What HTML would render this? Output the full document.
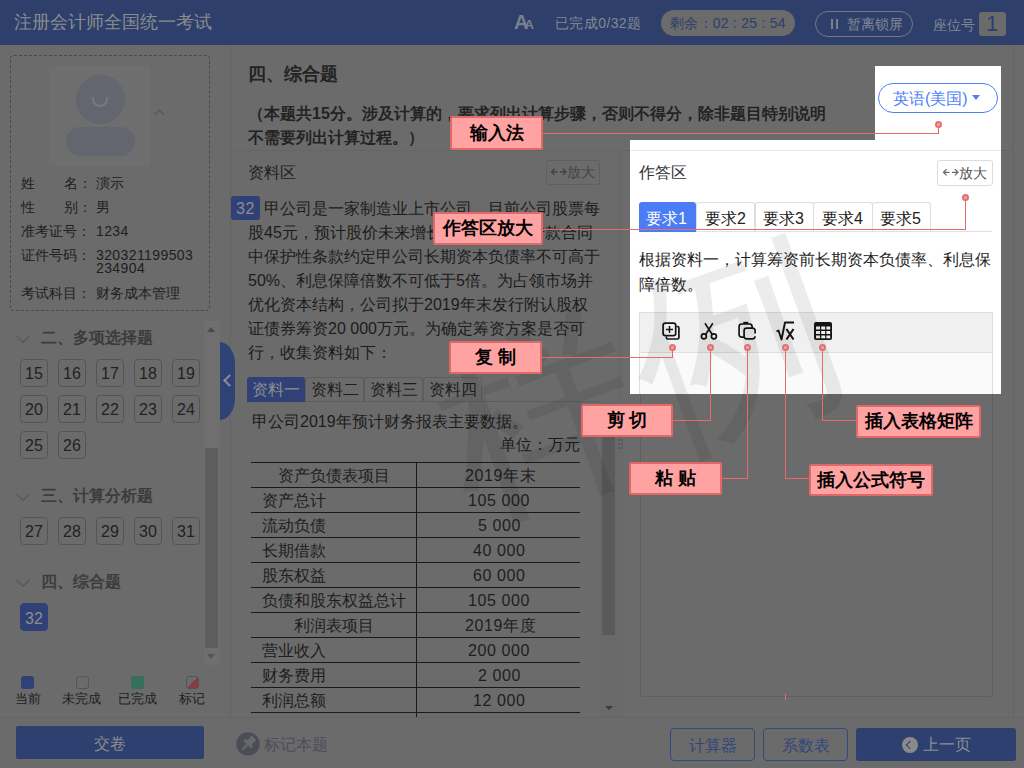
<!DOCTYPE html>
<html><head><meta charset="utf-8">
<style>
*{box-sizing:border-box;margin:0;padding:0}
html,body{width:1024px;height:768px;overflow:hidden;background:#6b6b6b;font-family:"Liberation Sans",sans-serif;color:#1e1e1e}
.a{position:absolute}
.t{position:absolute;white-space:nowrap;line-height:1}
.p{font-size:16px;color:#1c1c1c}
.num{position:absolute;width:28px;height:28px;border:1px solid #555;border-radius:4px;font-size:16px;line-height:27px;text-align:center;color:#222}
.sec{position:absolute;font-size:16px;font-weight:bold;color:#3c3c3c;line-height:1;white-space:nowrap}
.chev{position:absolute;width:10px;height:10px;border-right:1.3px solid #555;border-bottom:1.3px solid #555;transform:rotate(45deg)}
.row{position:absolute;left:251px;width:329px;height:1px;background:#1a1a1a}
.cell{position:absolute;font-size:16px;line-height:1;white-space:nowrap;color:#1e1e1e}
.dg{letter-spacing:0.6px}
.lbl{position:absolute;background:#ffa2a2;border:2px solid #e06868;border-radius:2px;font-size:17.5px;font-weight:bold;color:#000;text-align:center;white-space:nowrap}
.ln{position:absolute;background:#e96a6a}
.dot{position:absolute;width:7px;height:7px;border-radius:50%;background:#f4a6a6;border:2px solid #e27070}
.tab{position:absolute;border:1px solid #5d5d5d;border-bottom:none;border-radius:3px 3px 0 0}
</style></head><body>

<!-- HEADER -->
<div class="a" style="left:0;top:0;width:1024px;height:45px;background:#2d3f6a"></div>
<div class="t" style="left:14px;top:13px;font-size:18px;color:#8a8b90">注册会计师全国统一考试</div>
<div class="t" style="left:514px;top:12px;font-size:20px;font-weight:bold;color:#7b808c;letter-spacing:-4px">A<span style="font-size:13px">A</span></div>
<div class="t" style="left:555px;top:16px;font-size:14px;color:#838895;letter-spacing:0.4px">已完成0/32题</div>
<div class="a" style="left:661px;top:10px;width:134px;height:26px;border-radius:13px;background:#6b6b6b"></div>
<div class="t" style="left:670px;top:16px;font-size:14px;color:#2d3f6a;letter-spacing:0.25px">剩余：02 : 25 : 54</div>
<div class="a" style="left:815px;top:11px;width:98px;height:26px;border-radius:13px;border:1px solid #737884"></div>
<div class="a" style="left:831px;top:19px;width:2px;height:10px;background:#7b808c"></div>
<div class="a" style="left:836px;top:19px;width:2px;height:10px;background:#7b808c"></div>
<div class="t" style="left:847px;top:17px;font-size:14px;color:#838895">暂离锁屏</div>
<div class="t" style="left:933px;top:18px;font-size:14px;color:#838895">座位号</div>
<div class="a" style="left:979px;top:12px;width:27px;height:24px;border-radius:3px;background:#6b6b6b"></div>
<div class="t" style="left:986px;top:13px;font-size:22px;color:#2d3f6a">1</div>

<!-- SIDEBAR -->
<div class="a" style="left:230px;top:45px;width:1px;height:672px;background:#636363"></div>
<div class="a" style="left:10px;top:55px;width:200px;height:256px;border:1px dashed #4a4a4a;border-radius:4px"></div>
<div class="a" style="left:49px;top:66px;width:101px;height:100px;background:#6e6e6e"></div>
<div class="a" style="left:76px;top:75px;width:49px;height:49px;border-radius:50%;background:#63666e"></div>
<div class="a" style="left:66px;top:127px;width:69px;height:29px;border-radius:15px;background:#63666e"></div>
<div class="a" style="left:92px;top:97px;width:16px;height:10px;border:2px solid #767980;border-top:none;border-radius:0 0 8px 8px"></div>
<div class="a" style="left:156px;top:111px;width:7px;height:7px;border-left:1.3px solid #555;border-top:1.3px solid #555;transform:rotate(45deg)"></div>

<div class="t" style="left:21px;top:176px;font-size:14px">姓</div>
<div class="t" style="left:64px;top:176px;font-size:14px">名：</div>
<div class="t" style="left:96px;top:176px;font-size:14px">演示</div>
<div class="t" style="left:21px;top:200px;font-size:14px">性</div>
<div class="t" style="left:64px;top:200px;font-size:14px">别：</div>
<div class="t" style="left:96px;top:200px;font-size:14px">男</div>
<div class="t" style="left:21px;top:224px;font-size:14px">准考证号：</div>
<div class="t" style="left:96px;top:224px;font-size:14px;letter-spacing:0.4px">1234</div>
<div class="t" style="left:21px;top:248px;font-size:14px">证件号码：</div>
<div class="t" style="left:96px;top:248px;font-size:14px;letter-spacing:0.4px">320321199503</div>
<div class="t" style="left:96px;top:261px;font-size:14px;letter-spacing:0.4px">234904</div>
<div class="t" style="left:21px;top:286px;font-size:14px">考试科目：</div>
<div class="t" style="left:96px;top:286px;font-size:14px">财务成本管理</div>

<!-- sidebar scrollbar -->
<div class="a" style="left:204px;top:321px;width:16px;height:344px;background:#6f6f6f"></div>
<div class="a" style="left:205px;top:448px;width:13px;height:200px;background:#5d5d5d"></div>
<div class="a" style="left:207px;top:327px;width:0;height:0;border-left:4.5px solid transparent;border-right:4.5px solid transparent;border-bottom:5px solid #4a4a4a"></div>
<div class="a" style="left:207px;top:654px;width:0;height:0;border-left:4.5px solid transparent;border-right:4.5px solid transparent;border-top:5px solid #555"></div>
<!-- collapse tab -->
<div class="a" style="left:220px;top:342px;width:15px;height:78px;border-radius:0 15px 15px 0/0 22px 22px 0;background:#2f4276"></div>
<div class="a" style="left:225px;top:376px;width:9px;height:9px;border-left:2px solid #8c8f98;border-bottom:2px solid #8c8f98;transform:rotate(45deg)"></div>

<div class="chev" style="left:18px;top:331px"></div>
<div class="sec" style="left:41px;top:330px">二、多项选择题</div>
<div class="num" style="left:20px;top:359px">15</div>
<div class="num" style="left:58px;top:359px">16</div>
<div class="num" style="left:96px;top:359px">17</div>
<div class="num" style="left:134px;top:359px">18</div>
<div class="num" style="left:172px;top:359px">19</div>
<div class="num" style="left:20px;top:395px">20</div>
<div class="num" style="left:58px;top:395px">21</div>
<div class="num" style="left:96px;top:395px">22</div>
<div class="num" style="left:134px;top:395px">23</div>
<div class="num" style="left:172px;top:395px">24</div>
<div class="num" style="left:20px;top:431px">25</div>
<div class="num" style="left:58px;top:431px">26</div>

<div class="chev" style="left:18px;top:489px"></div>
<div class="sec" style="left:41px;top:488px">三、计算分析题</div>
<div class="num" style="left:20px;top:517px">27</div>
<div class="num" style="left:58px;top:517px">28</div>
<div class="num" style="left:96px;top:517px">29</div>
<div class="num" style="left:134px;top:517px">30</div>
<div class="num" style="left:172px;top:517px">31</div>

<div class="chev" style="left:18px;top:575px"></div>
<div class="sec" style="left:41px;top:574px">四、综合题</div>
<div class="num" style="left:20px;top:603px;background:#2f4176;border-color:#2f4176;color:#8e8e8e;line-height:29px">32</div>

<!-- legend -->
<div class="a" style="left:21px;top:676px;width:13px;height:13px;border-radius:3px;background:#2f4176"></div>
<div class="a" style="left:76px;top:676px;width:13px;height:13px;border-radius:3px;border:1px solid #555"></div>
<div class="a" style="left:131px;top:676px;width:13px;height:13px;border-radius:3px;background:#36705a"></div>
<div class="a" style="left:186px;top:676px;width:13px;height:13px;border-radius:3px;border:1px solid #555;background:linear-gradient(135deg,#6b6b6b 50%,#8a3a44 50%)"></div>
<div class="t" style="left:15px;top:692px;font-size:13px">当前</div>
<div class="t" style="left:62px;top:692px;font-size:13px">未完成</div>
<div class="t" style="left:118px;top:692px;font-size:13px">已完成</div>
<div class="t" style="left:179px;top:692px;font-size:13px">标记</div>

<!-- BOTTOM BAR -->
<div class="a" style="left:0;top:717px;width:1024px;height:1px;background:#656565"></div>
<div class="a" style="left:16px;top:726px;width:188px;height:33px;border-radius:2px;background:#2e4070"></div>
<div class="t" style="left:94px;top:736px;font-size:16px;color:#8c8c8c">交卷</div>
<svg class="a" style="left:236px;top:732px" width="24" height="24" viewBox="0 0 24 24"><circle cx="12" cy="12" r="11.7" fill="#4b4e58"/><g transform="translate(12.3 11.6) rotate(45)" fill="#6b6b6b"><rect x="-3.5" y="-8" width="7" height="2.2"/><path d="M-2.5 -6 h5 l1 5.5 h-7z"/><rect x="-5.5" y="-1" width="11" height="2.4"/><rect x="-1" y="1" width="2" height="7"/></g></svg>
<div class="t" style="left:264px;top:737px;font-size:16px;color:#4b4e58">标记本题</div>
<div class="a" style="left:670px;top:728px;width:85px;height:33px;border-radius:4px;border:1.3px solid #34497f"></div>
<div class="t" style="left:689px;top:738px;font-size:16px;color:#33467a">计算器</div>
<div class="a" style="left:763px;top:728px;width:85px;height:33px;border-radius:4px;border:1.3px solid #34497f"></div>
<div class="t" style="left:782px;top:738px;font-size:16px;color:#33467a">系数表</div>
<div class="a" style="left:856px;top:728px;width:160px;height:33px;border-radius:3px;background:#2e4070"></div>
<div class="a" style="left:902px;top:737px;width:16px;height:16px;border-radius:50%;background:#8a8a8a"></div>
<div class="a" style="left:907px;top:742px;width:6px;height:6px;border-left:1.5px solid #2e4070;border-bottom:1.5px solid #2e4070;transform:rotate(45deg)"></div>
<div class="t" style="left:923px;top:737px;font-size:16px;color:#8a8e98">上一页</div>

<!-- MAIN -->
<div class="a" style="left:1013px;top:45px;width:1px;height:672px;background:#646464"></div>
<div class="t" style="left:248px;top:65px;font-size:18px;font-weight:bold;color:#232323">四、综合题</div>
<div class="t" style="left:248px;top:106px;font-size:16px;font-weight:bold;color:#232323">（本题共15分。涉及计算的，要求列出计算步骤，否则不得分，除非题目特别说明</div>
<div class="t" style="left:248px;top:130px;font-size:16px;font-weight:bold;color:#232323">不需要列出计算过程。）</div>
<div class="a" style="left:231px;top:150px;width:782px;height:1px;background:#656565"></div>

<div class="t" style="left:248px;top:165px;font-size:16px;color:#222">资料区</div>
<div class="a" style="left:546px;top:160px;width:54px;height:25px;border:1px solid #5f5f5f;border-radius:3px"></div>
<svg class="a" style="left:0;top:0;overflow:visible" width="1" height="1"><path d="M557.5 171.8 h-6 M554.6 168.7 l-3.1 3.1 l3.1 3.1 M560 171.8 h6 M562.9 168.7 l3.1 3.1 l-3.1 3.1" fill="none" stroke="#3e3e3e" stroke-width="1.2"/></svg>
<div class="t" style="left:567px;top:165px;font-size:14px;color:#454545">放大</div>

<div class="a" style="left:231px;top:196px;width:29px;height:24px;border-radius:3px;background:#2f4176"></div>
<div class="t" style="left:236px;top:201px;font-size:16px;color:#8e8e8e;letter-spacing:0.5px">32</div>
<div class="t p" style="left:264px;top:201px">甲公司是一家制造业上市公司，目前公司股票每</div>
<div class="t p" style="left:248px;top:225px">股45元，预计股价未来增长率8%；长期借款合同</div>
<div class="t p" style="left:248px;top:249px">中保护性条款约定甲公司长期资本负债率不可高于</div>
<div class="t p" style="left:248px;top:273px">50%、利息保障倍数不可低于5倍。为占领市场并</div>
<div class="t p" style="left:248px;top:297px">优化资本结构，公司拟于2019年末发行附认股权</div>
<div class="t p" style="left:248px;top:321px">证债券筹资20 000万元。为确定筹资方案是否可</div>
<div class="t p" style="left:248px;top:345px">行，收集资料如下：</div>

<!-- material tabs -->
<div class="a" style="left:247px;top:401px;width:354px;height:1px;background:#5d5d5d"></div>
<div class="a" style="left:247px;top:377px;width:58px;height:25px;background:#2f4176;border-radius:3px 3px 0 0"></div>
<div class="tab" style="left:305px;top:377px;width:59px;height:24px"></div>
<div class="tab" style="left:364px;top:377px;width:59px;height:24px"></div>
<div class="tab" style="left:423px;top:377px;width:59px;height:24px"></div>
<div class="t" style="left:252px;top:382px;font-size:16px;color:#8e8e8e">资料一</div>
<div class="t" style="left:311px;top:382px;font-size:16px">资料二</div>
<div class="t" style="left:370px;top:382px;font-size:16px">资料三</div>
<div class="t" style="left:429px;top:382px;font-size:16px">资料四</div>

<div class="t p" style="left:252px;top:414px">甲公司2019年预计财务报表主要数据。</div>
<div class="t p" style="left:500px;top:437px">单位：万元</div>

<!-- table -->
<div class="row" style="top:462px"></div>
<div class="row" style="top:487px"></div>
<div class="row" style="top:512px"></div>
<div class="row" style="top:537px"></div>
<div class="row" style="top:562px"></div>
<div class="row" style="top:587px"></div>
<div class="row" style="top:612px"></div>
<div class="row" style="top:637px"></div>
<div class="row" style="top:662px"></div>
<div class="row" style="top:687px"></div>
<div class="row" style="top:712px"></div>
<div class="a" style="left:416px;top:462px;width:1px;height:255px;background:#1a1a1a"></div>
<div class="cell" style="left:278px;top:468px">资产负债表项目</div><div class="cell dg" style="left:465px;top:468px">2019年末</div>
<div class="cell" style="left:262px;top:493px">资产总计</div><div class="cell dg" style="left:468px;top:493px">105 000</div>
<div class="cell" style="left:262px;top:518px">流动负债</div><div class="cell dg" style="left:478px;top:518px">5 000</div>
<div class="cell" style="left:262px;top:543px">长期借款</div><div class="cell dg" style="left:473px;top:543px">40 000</div>
<div class="cell" style="left:262px;top:568px">股东权益</div><div class="cell dg" style="left:473px;top:568px">60 000</div>
<div class="cell" style="left:262px;top:593px">负债和股东权益总计</div><div class="cell dg" style="left:468px;top:593px">105 000</div>
<div class="cell" style="left:294px;top:618px">利润表项目</div><div class="cell dg" style="left:465px;top:618px">2019年度</div>
<div class="cell" style="left:262px;top:643px">营业收入</div><div class="cell dg" style="left:468px;top:643px">200 000</div>
<div class="cell" style="left:262px;top:668px">财务费用</div><div class="cell dg" style="left:478px;top:668px">2 000</div>
<div class="cell" style="left:262px;top:693px">利润总额</div><div class="cell dg" style="left:473px;top:693px">12 000</div>

<!-- material scrollbar -->
<div class="a" style="left:617px;top:150px;width:6px;height:567px;background:#696969"></div>
<div class="a" style="left:600px;top:402px;width:17px;height:315px;background:#696969"></div>
<div class="a" style="left:602px;top:437px;width:13px;height:198px;background:#5a5a5a"></div>
<div class="a" style="left:604.5px;top:705.5px;width:0;height:0;border-left:4px solid transparent;border-right:4px solid transparent;border-top:4.5px solid #3c3c3c"></div>
<div class="a" style="left:618px;top:439px;width:2px;height:2px;background:#585858;box-shadow:3px 0 #585858,0 4px #585858,3px 4px #585858,0 8px #585858,3px 8px #585858"></div>

<!-- answer area dim part -->
<div class="a" style="left:640px;top:352px;width:353px;height:345px;border:1px solid #5f5f5f;border-radius:3px"></div>

<!-- HIGHLIGHT REGION -->
<div class="a" style="left:0;top:0;width:1024px;height:768px;clip-path:polygon(875px 66px,1001px 66px,1001px 394px,630px 394px,630px 140px,875px 140px);background:#fff">
  <div class="a" style="left:630px;top:150px;width:371px;height:1px;background:#e8e8e8"></div>
  <div class="a" style="left:878px;top:83px;width:120px;height:30px;border:1px solid #4d80f6;border-radius:15px"></div>
  <div class="t" style="left:893px;top:91px;font-size:16px;color:#4d7ff5">英语(美国)</div>
  <div class="a" style="left:972px;top:95px;width:0;height:0;border-left:4.5px solid transparent;border-right:4.5px solid transparent;border-top:5px solid #4d7ff5"></div>

  <div class="t" style="left:639px;top:165px;font-size:16px;color:#333">作答区</div>
  <div class="a" style="left:937px;top:160px;width:56px;height:26px;border:1px solid #dcdcdc;border-radius:3px"></div>
  <svg class="a" style="left:0;top:0;overflow:visible" width="1" height="1"><path d="M949.5 172.3 h-6 M946.6 169.2 l-3.1 3.1 l3.1 3.1 M952 172.3 h6 M954.9 169.2 l3.1 3.1 l-3.1 3.1" fill="none" stroke="#666" stroke-width="1.2"/></svg>
  <div class="t" style="left:959px;top:166px;font-size:14px;color:#555">放大</div>

  <div class="a" style="left:639px;top:231px;width:353px;height:1px;background:#dde2ea"></div>
  <div class="a" style="left:639px;top:202px;width:57px;height:30px;background:#4a7cf5;border-radius:3px 3px 0 0"></div>
  <div class="a" style="left:696px;top:202px;width:59px;height:29px;border:1px solid #dedede;border-bottom:none;border-radius:3px 3px 0 0"></div>
  <div class="a" style="left:755px;top:202px;width:59px;height:29px;border:1px solid #dedede;border-bottom:none;border-radius:3px 3px 0 0"></div>
  <div class="a" style="left:813px;top:202px;width:60px;height:29px;border:1px solid #dedede;border-bottom:none;border-radius:3px 3px 0 0"></div>
  <div class="a" style="left:872px;top:202px;width:59px;height:29px;border:1px solid #dedede;border-bottom:none;border-radius:3px 3px 0 0"></div>
  <div class="t" style="left:646px;top:211px;font-size:16px;color:#fff">要求1</div>
  <div class="t" style="left:705px;top:211px;font-size:16px;color:#222">要求2</div>
  <div class="t" style="left:763px;top:211px;font-size:16px;color:#222">要求3</div>
  <div class="t" style="left:822px;top:211px;font-size:16px;color:#222">要求4</div>
  <div class="t" style="left:880px;top:211px;font-size:16px;color:#222">要求5</div>

  <div class="t" style="left:639px;top:252px;font-size:16px;color:#1e1e1e">根据资料一，计算筹资前长期资本负债率、利息保</div>
  <div class="t" style="left:639px;top:277px;font-size:16px;color:#1e1e1e">障倍数。</div>

  <div class="a" style="left:639px;top:312px;width:354px;height:41px;background:#f0f0f0;border:1px solid #dedede"></div>
  <div class="a" style="left:639px;top:352px;width:354px;height:60px;background:#fafafa;border:1px solid #dedede"></div>
  <svg class="a" style="left:0;top:0" width="1024" height="400" viewBox="0 0 1024 400">
    <g fill="none" stroke="#141414" stroke-width="1.7" stroke-linejoin="round" stroke-linecap="butt">
      <path d="M666.4 336.5 v1 a1.5 1.5 0 0 0 1.5 1.5 h9.5 a1.5 1.5 0 0 0 1.5 -1.5 v-9.5 a1.5 1.5 0 0 0 -1.5 -1.5 h-1"/>
      <rect x="663.1" y="323.1" width="12.6" height="12.6" rx="2.2"/>
      <path d="M666 329.5 h7 M669.5 326 v7" stroke-width="1.5"/>
      <circle cx="703.9" cy="336.3" r="2.5"/><circle cx="713.9" cy="336.3" r="2.5"/>
      <path d="M705 323.2 L712 334.2 M712.8 323.2 L705.8 334.2" stroke-width="1.6"/>
      <path d="M744.1 337.1 H741.6 A2.5 2.5 0 0 1 739.1 334.6 V326.5 A2.5 2.5 0 0 1 741.6 324 H749.6 A2.5 2.5 0 0 1 752.1 326.5 V328.1"/>
      <path d="M755.1 333.6 V330.6 A2.5 2.5 0 0 0 752.6 328.1 H746.6 A2.5 2.5 0 0 0 744.1 330.6 V336.3 A2.5 2.5 0 0 0 746.6 338.8 H752.6 A2.5 2.5 0 0 0 755.1 336.3"/>
      <path d="M743.3 322.9 h5" stroke-width="2.2"/>
      <path d="M776.5 331.5 l2 -1 l3 9 l3.5 -17 h9" stroke-width="1.9"/>
      <path d="M786.5 329 l7 10.5 M793.5 329 l-7 10.5" stroke-width="2.1"/>
    </g>
    <rect x="814" y="322" width="18" height="18" rx="2" fill="#141414"/>
    <g fill="#f0f0f0">
      <rect x="816" y="326.5" width="4" height="3"/><rect x="821.2" y="326.5" width="4" height="3"/><rect x="826.4" y="326.5" width="3.8" height="3"/>
      <rect x="816" y="331" width="4" height="3"/><rect x="821.2" y="331" width="4" height="3"/><rect x="826.4" y="331" width="3.8" height="3"/>
      <rect x="816" y="335.5" width="4" height="2.8"/><rect x="821.2" y="335.5" width="4" height="2.8"/><rect x="826.4" y="335.5" width="3.8" height="2.8"/>
    </g>
  </svg>
</div>

<!-- watermark -->
<div class="t" style="left:434px;top:277px;font-size:205px;color:rgba(0,0,0,0.075);transform:rotate(-20deg);transform-origin:50% 50%">样例</div>

<!-- CALLOUTS -->
<div class="ln" style="left:543px;top:133px;width:396px;height:1px"></div>
<div class="ln" style="left:938px;top:124px;width:1px;height:10px"></div>
<div class="dot" style="left:934.5px;top:120.5px"></div>
<div class="lbl" style="left:450px;top:116px;width:93px;height:34px;line-height:30px">输入法</div>

<div class="ln" style="left:541px;top:229px;width:425px;height:1px"></div>
<div class="ln" style="left:965px;top:197px;width:1px;height:33px"></div>
<div class="dot" style="left:961.5px;top:193.5px"></div>
<div class="lbl" style="left:433px;top:212px;width:110px;height:33px;line-height:29px">作答区放大</div>

<div class="ln" style="left:541px;top:357px;width:132px;height:1px"></div>
<div class="ln" style="left:672px;top:347px;width:1px;height:11px"></div>
<div class="dot" style="left:669px;top:344px"></div>
<div class="lbl" style="left:449px;top:341px;width:93px;height:33px;line-height:29px">复&nbsp;制</div>

<div class="ln" style="left:672px;top:420px;width:39px;height:1px"></div>
<div class="ln" style="left:710px;top:347px;width:1px;height:74px"></div>
<div class="dot" style="left:707px;top:344px"></div>
<div class="lbl" style="left:581px;top:404px;width:92px;height:33px;line-height:29px">剪&nbsp;切</div>

<div class="ln" style="left:721px;top:478px;width:27px;height:1px"></div>
<div class="ln" style="left:747px;top:347px;width:1px;height:132px"></div>
<div class="dot" style="left:744px;top:344px"></div>
<div class="lbl" style="left:629px;top:462px;width:93px;height:33px;line-height:29px">粘&nbsp;贴</div>

<div class="ln" style="left:785px;top:478px;width:25px;height:1px"></div>
<div class="ln" style="left:785px;top:347px;width:1px;height:132px"></div>
<div class="dot" style="left:782px;top:344px"></div>
<div class="lbl" style="left:809px;top:464px;width:124px;height:32px;line-height:28px">插入公式符号</div>

<div class="ln" style="left:822px;top:420px;width:35px;height:1px"></div>
<div class="ln" style="left:822px;top:347px;width:1px;height:74px"></div>
<div class="dot" style="left:819px;top:344px"></div>
<div class="lbl" style="left:856px;top:405px;width:125px;height:33px;line-height:29px">插入表格矩阵</div>

<div class="ln" style="left:785px;top:694px;width:1px;height:6px"></div>

</body></html>
